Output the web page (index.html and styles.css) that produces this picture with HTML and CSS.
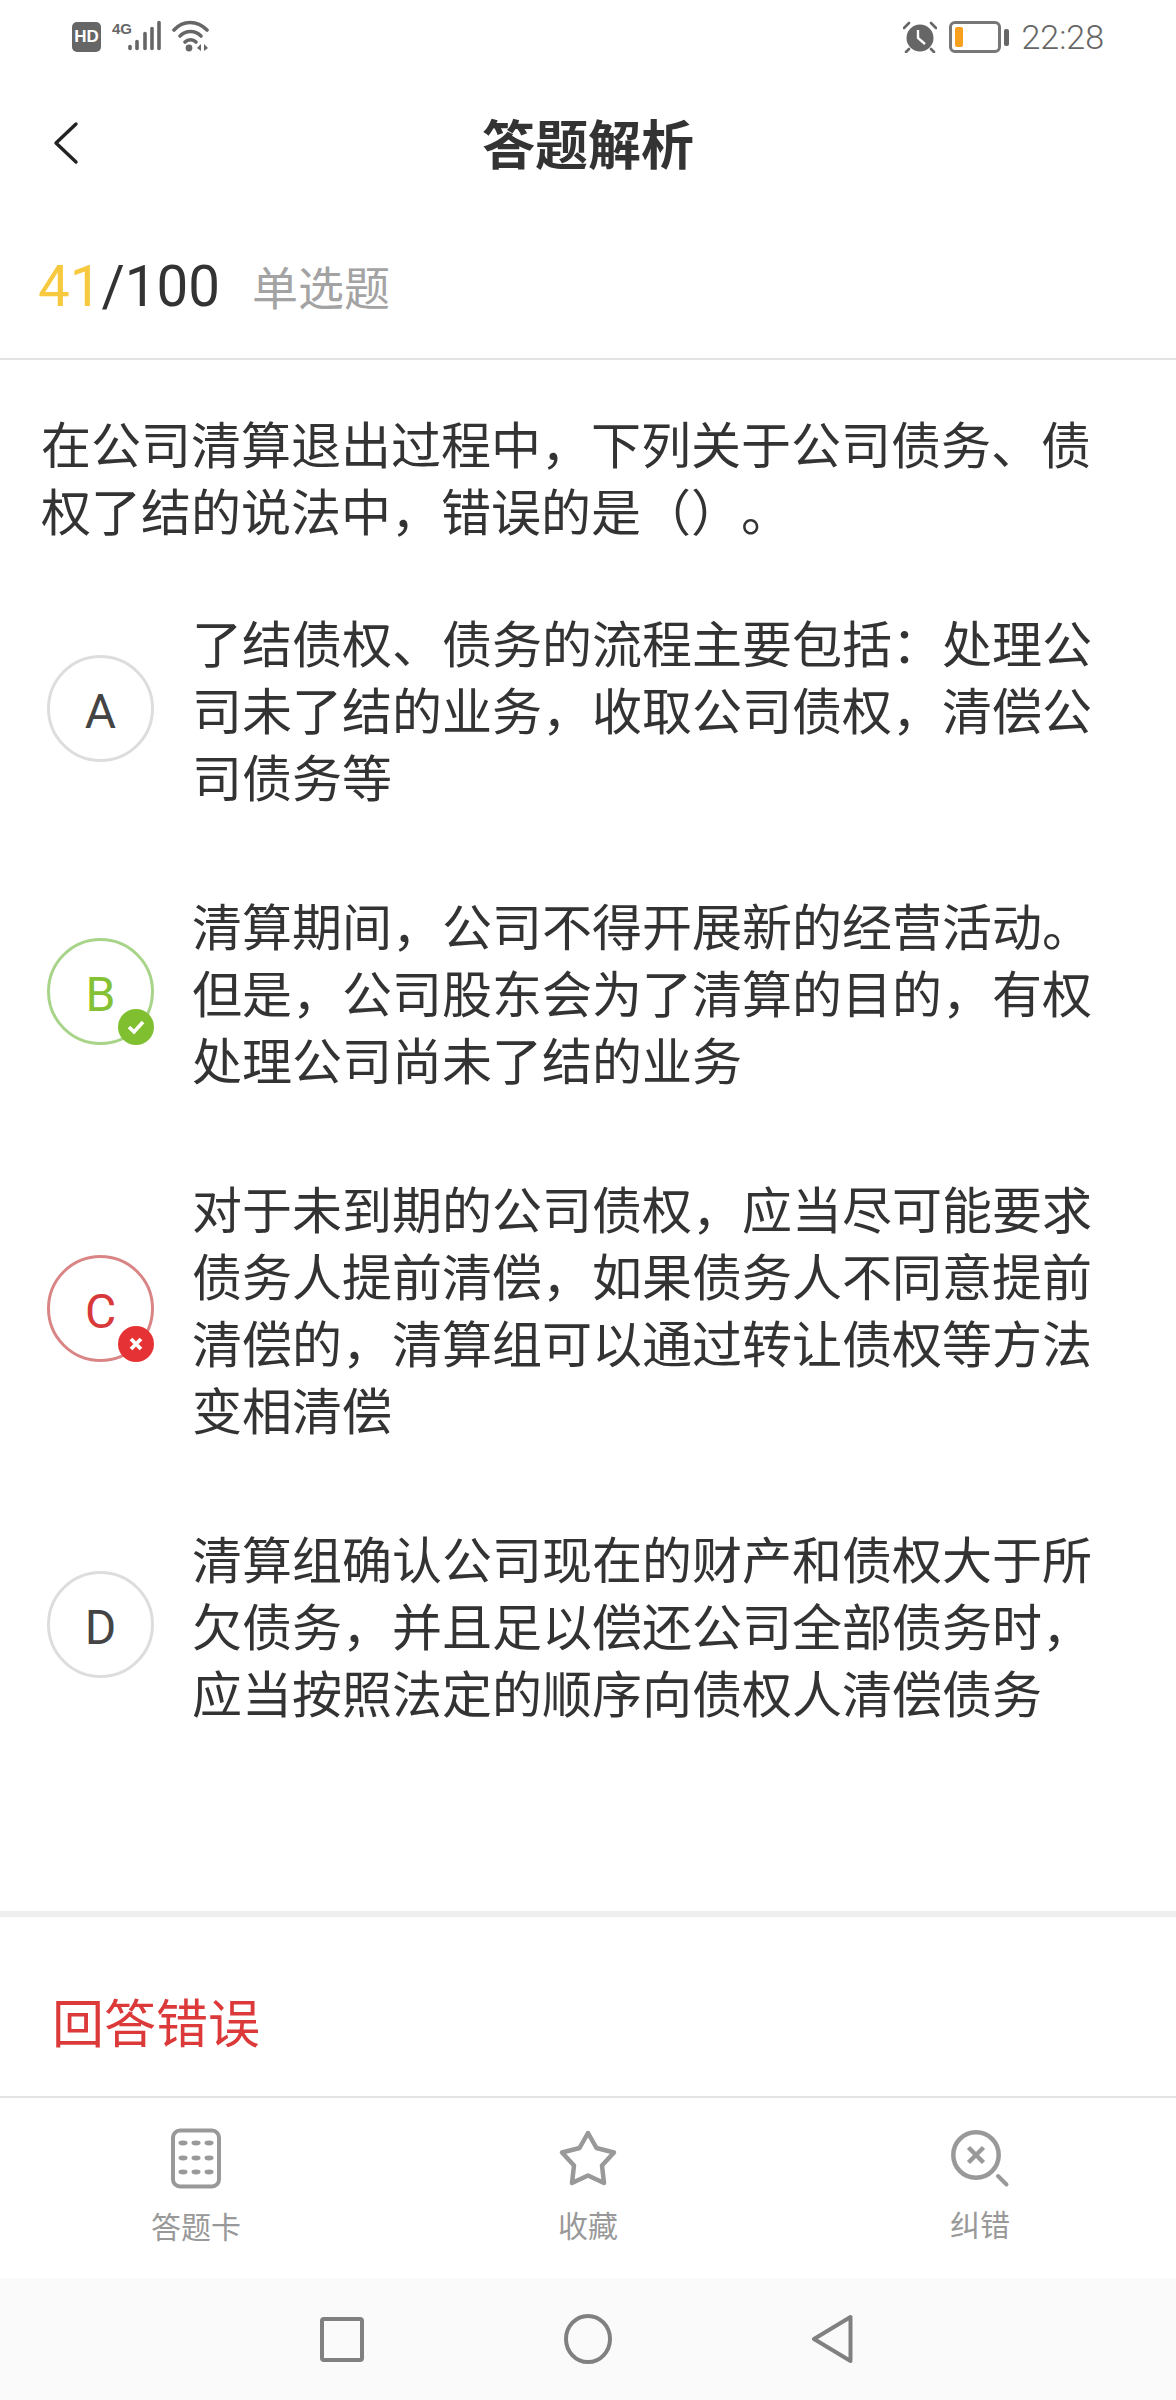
FILE: index.html
```html
<!DOCTYPE html>
<html lang="zh-CN">

<head>
    <meta charset="UTF-8">
    <meta name="viewport" content="width=device-width, initial-scale=1.0">
    <title>答题解析</title>
    <link rel="stylesheet" href="styles.css">
</head>

<body>
    <div class="page">
        <!-- 状态栏 -->
        <div class="status">
            <div class="status-left">
                <span class="hd">HD</span>
                <span class="net">4G</span>
                <svg class="signal" width="34" height="32" viewBox="0 0 34 32">
                    <g stroke="#666" stroke-width="3.6" stroke-linecap="round">
                        <path d="M2 28.500v-2" />
                        <path d="M9 28.500v-7" />
                        <path d="M17 28.500v-15" />
                        <path d="M24 28.500v-20" />
                        <path d="M31 28.500v-26" />
                    </g>
                </svg>
                <svg class="wifi" width="38" height="32" viewBox="0 0 38 32">
                    <g fill="none" stroke="#666" stroke-width="3.6" stroke-linecap="round">
                        <path d="M2 10C11 0 25 0 35 10" />
                        <path d="M8 16C14 10 23 10 29 16" />
                        <path d="M13 22C16 19 21 19 24 22" />
                    </g>
                    <circle cx="17" cy="28" r="3.400" fill="#666" />
                    <path d="M29 24v7l-4-3zM32 24v7l4-3z" fill="#666" />
                </svg>
            </div>
            <div class="status-right">
                <svg class="alarm" width="34" height="32" viewBox="0 0 34 32">
                    <circle cx="17" cy="17" r="13.500" fill="#666" />
                    <path d="M15 9v8l7 6" fill="none" stroke="#fff" stroke-width="2.400" />
                    <path d="M1 7l5-5M33 7l-5-5M6 28l-3 3M28 28l3 3" stroke="#666" stroke-width="2.600" stroke-linecap="round" />
                </svg>
                <div class="battery">
                    <div class="battery-body"><span class="battery-level"></span></div>
                    <span class="battery-cap"></span>
                </div>
                <span class="time">22:28</span>
            </div>
        </div>

        <!-- 标题栏 -->
        <div class="title-bar">
            <svg class="back" width="26" height="44" viewBox="0 0 26 44">
                <path d="M23 3L3 22l20 19" fill="none" stroke="#222" stroke-width="3.400" stroke-linecap="round" stroke-linejoin="round" />
            </svg>
            <h1 class="title">答题解析</h1>
        </div>

        <div class="counter">
            <span class="num"><em>41</em>/100</span>
            <span class="type">单选题</span>
        </div>

        <div class="question">在公司清算退出过程中，下列关于公司债务、债权了结的说法中，错误的是（）。</div>

        <div class="options">
            <div class="option">
                <div class="circle">A</div>
                <div class="option-text">了结债权、债务的流程主要包括：处理公司未了结的业务，收取公司债权，清偿公司债务等</div>
            </div>
            <div class="option">
                <div class="circle right">B
                    <span class="badge badge-right">
                        <svg width="20" height="16" viewBox="0 0 20 16">
                            <path d="M3 8l5 5 9-10" fill="none" stroke="#fff" stroke-width="3.600" />
                        </svg>
                    </span>
                </div>
                <div class="option-text">清算期间，公司不得开展新的经营活动。但是，公司股东会为了清算的目的，有权处理公司尚未了结的业务</div>
            </div>
            <div class="option">
                <div class="circle wrong">C
                    <span class="badge badge-wrong">
                        <svg width="14" height="14" viewBox="0 0 14 14">
                            <path d="M2 2l10 10M12 2L2 12" fill="none" stroke="#fff" stroke-width="3.800" />
                        </svg>
                    </span>
                </div>
                <div class="option-text">对于未到期的公司债权，应当尽可能要求债务人提前清偿，如果债务人不同意提前清偿的，清算组可以通过转让债权等方法变相清偿</div>
            </div>
            <div class="option">
                <div class="circle">D</div>
                <div class="option-text">清算组确认公司现在的财产和债权大于所欠债务，并且足以偿还公司全部债务时，应当按照法定的顺序向债权人清偿债务</div>
            </div>
        </div>

        <div class="result">回答错误</div>

        <!-- 底部按钮 -->
        <div class="tabs">
            <div class="tab">
                <svg width="50" height="62" viewBox="0 0 50 62">
                    <rect x="2" y="2.500" width="46" height="56" rx="7" fill="none" stroke="#999" stroke-width="4" />
                    <g fill="#999">
                        <ellipse cx="12" cy="15" rx="4.500" ry="2.400" /><ellipse cx="25" cy="15" rx="4.500" ry="2.400" /><ellipse cx="38" cy="15" rx="4.500" ry="2.400" />
                        <ellipse cx="12" cy="30" rx="4.500" ry="2.400" /><ellipse cx="25" cy="30" rx="4.500" ry="2.400" /><ellipse cx="38" cy="30" rx="4.500" ry="2.400" />
                        <ellipse cx="12" cy="44" rx="4.500" ry="2.400" /><ellipse cx="25" cy="44" rx="4.500" ry="2.400" /><ellipse cx="38" cy="44" rx="4.500" ry="2.400" />
                    </g>
                </svg>
                <span class="tab-label">答题卡</span>
            </div>
            <div class="tab">
                <svg width="62" height="62" viewBox="0 0 62 62">
                    <path d="M31 5L39.500 20 57 24.500 45 37.500 47 55 31 47.500 15 55 17 37.500 5 24.500 22.500 20z" fill="none" stroke="#999" stroke-width="4.500" stroke-linejoin="round" />
                </svg>
                <span class="tab-label tab-label-mid">收藏</span>
            </div>
            <div class="tab">
                <svg width="60" height="62" viewBox="0 0 60 62">
                    <circle cx="26" cy="27" r="22.700" fill="none" stroke="#999" stroke-width="4.500" />
                    <path d="M18.500 19.500l15 15M33.500 19.500l-15 15" fill="none" stroke="#999" stroke-width="4.500" />
                    <path d="M48 48l8.500 8.500" fill="none" stroke="#999" stroke-width="4" stroke-linecap="round" />
                </svg>
                <span class="tab-label tab-label-high">纠错</span>
            </div>
        </div>

        <!-- 系统导航 -->
        <div class="nav">
            <svg width="44" height="45" viewBox="0 0 44 45">
                <rect x="2" y="2" width="40" height="41" rx="2" fill="none" stroke="#808080" stroke-width="4" />
            </svg>
            <svg width="48" height="50" viewBox="0 0 48 50">
                <ellipse cx="24" cy="25" rx="22" ry="23" fill="none" stroke="#808080" stroke-width="4" />
            </svg>
            <svg width="42" height="50" viewBox="0 0 42 50">
                <path d="M38.500 3v44L2 25z" fill="none" stroke="#808080" stroke-width="4" stroke-linejoin="round" />
            </svg>
        </div>
    </div>
</body>

</html>
```

FILE: styles.css
```css
* {
    margin: 0;
    padding: 0;
    box-sizing: border-box;
}

body {
    background-color: #fff;
    font-family: "Noto Sans CJK SC", "Noto Sans", sans-serif;
    color: #333;
    text-spacing-trim: space-all;
}

.page {
    width: 1176px;
    height: 2400px;
    display: flex;
    flex-direction: column;
    overflow: hidden;
}

/* 状态栏 */
.status {
    height: 72px;
    padding: 20px 72px 0 72px;
    display: flex;
    justify-content: space-between;
    align-items: flex-start;
    color: #666;
}

.status-left,
.status-right {
    display: flex;
    align-items: flex-start;
}

.hd {
    width: 29px;
    height: 30px;
    margin-top: 2px;
    border-radius: 5px;
    background-color: #666;
    color: #fff;
    font-family: "Liberation Sans", sans-serif;
    font-size: 17px;
    font-weight: bold;
    line-height: 30px;
    text-align: center;
}

.net {
    width: 16px;
    margin-left: 11px;
    margin-top: 3px;
    font-family: "Liberation Sans", sans-serif;
    font-size: 15px;
    font-weight: bold;
    line-height: 12px;
    white-space: nowrap;
}

.wifi {
    margin-left: 10px;
}

.status-right {
    padding-top: 1px;
}

.battery {
    display: flex;
    align-items: center;
    height: 32px;
    margin-left: 12px;
}

.battery-body {
    width: 52px;
    height: 32px;
    border: 3px solid #777;
    border-radius: 6px;
    padding: 3px;
}

.battery-level {
    display: block;
    width: 8px;
    height: 20px;
    border-radius: 2px;
    background-color: #f9a01e;
}

.battery-cap {
    width: 5px;
    height: 17px;
    margin-left: 3px;
    border-radius: 2px;
    background-color: #666;
}

.time {
    margin-left: 12px;
    font-family: Roboto, sans-serif;
    font-size: 34px;
    font-weight: 300;
    line-height: 32px;
}

/* 标题栏 */
.title-bar {
    height: 146px;
    padding-left: 53px;
    position: relative;
    display: flex;
    align-items: center;
}

.back {
    margin-bottom: 4px;
}

.title {
    position: absolute;
    left: 0;
    right: 0;
    top: 40px;
    text-align: center;
    font-size: 53px;
    font-weight: bold;
    line-height: 60px;
}

.counter {
    height: 142px;
    padding: 0 0 2px 38px;
    display: flex;
    align-items: center;
    border-bottom: 2px solid #e2e2e2;
}

.num {
    font-family: Roboto, sans-serif;
    font-size: 56.500px;
    font-weight: 400;
}

.num em {
    font-style: normal;
    color: #f7c93e;
}

.type {
    margin: 0 0 5px 32px;
    font-size: 46px;
    color: #a3a3a3;
}

.question {
    padding: 49px 60px 0 41px;
    font-size: 50px;
    line-height: 67px;
}

.options {
    padding: 65px 60px 0 47px;
    display: flex;
    flex-direction: column;
    gap: 82px;
}

.option {
    display: flex;
    align-items: center;
}

.circle {
    flex: none;
    position: relative;
    width: 107px;
    height: 107px;
    border: 3px solid #ddd;
    border-radius: 50%;
    font-family: Roboto, sans-serif;
    font-size: 48px;
    font-weight: 400;
    line-height: 107px;
    text-align: center;
    color: #444;
}

.circle.right {
    border-color: #a8d48a;
    color: #85c135;
}

.circle.wrong {
    border-color: #d98585;
    color: #d8383a;
}

.badge {
    position: absolute;
    right: -3px;
    bottom: -3px;
    width: 36px;
    height: 36px;
    border-radius: 50%;
    display: flex;
    align-items: center;
    justify-content: center;
}

.badge-right {
    background-color: #7fbf30;
}

.badge-wrong {
    background-color: #e53335;
}

.option-text {
    margin-left: 38px;
    font-size: 50px;
    line-height: 67px;
}

.result {
    margin-top: 186px;
    height: 187px;
    padding: 69px 0 0 52px;
    border-top: 6px solid #eee;
    border-bottom: 2px solid #e4e4e4;
    font-size: 52px;
    line-height: 70px;
    color: #dc3a3a;
}

/* 底部按钮 */
.tabs {
    height: 180px;
    padding: 30px 0 0;
    display: grid;
    grid-template-columns: 392px 392px 392px;
}

.tab {
    display: flex;
    flex-direction: column;
    align-items: center;
}

.tab-label {
    margin-top: 13px;
    font-size: 30px;
    line-height: 44px;
    color: #999;
}

.tab-label-mid {
    margin-top: 12px;
}

.tab-label-high {
    margin-top: 11px;
}

.nav {
    flex: 1;
    background-color: #fafafa;
    display: flex;
    justify-content: center;
    align-items: center;
    gap: 200px;
    padding-right: 2px;
}
```
